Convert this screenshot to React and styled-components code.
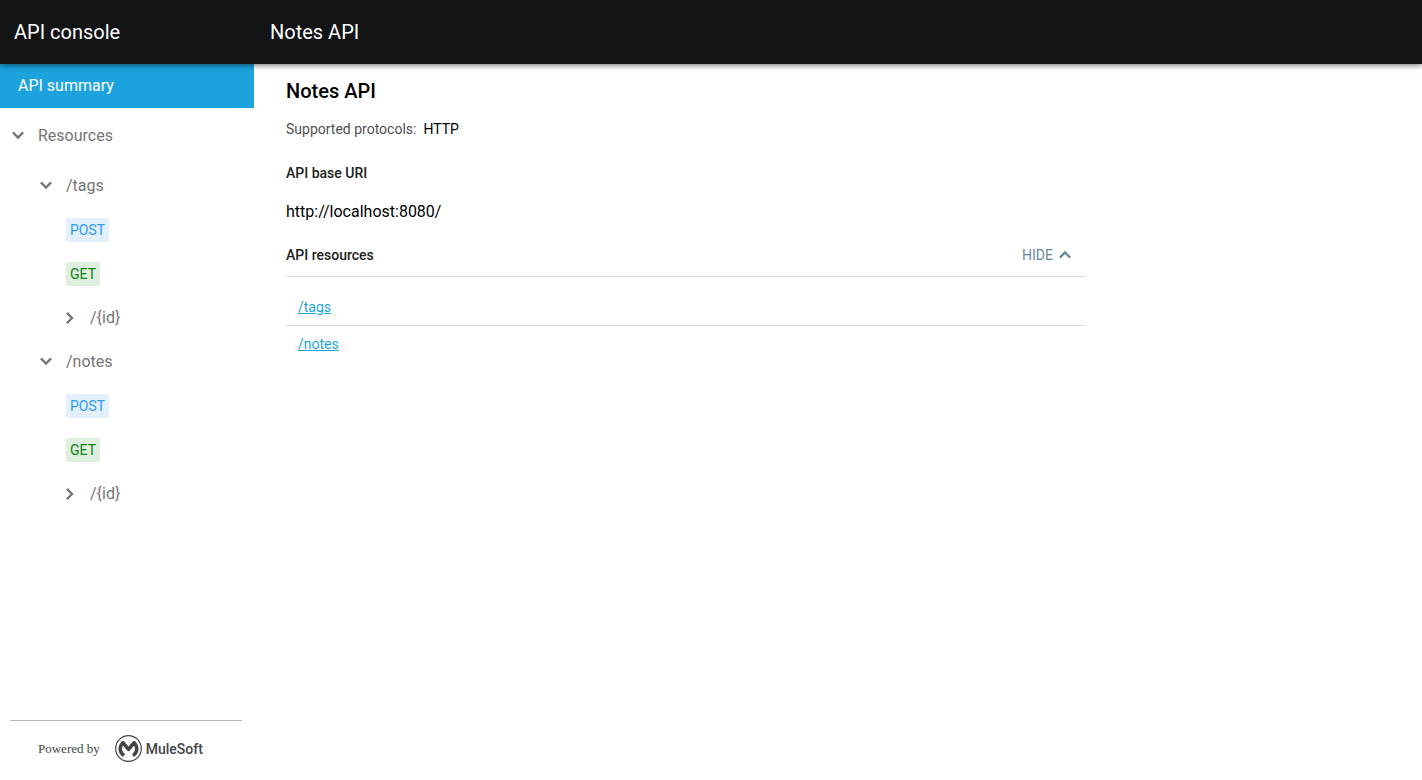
import React, { useState } from 'react'
import styled, { createGlobalStyle, css, ThemeProvider } from 'styled-components'

const theme = {
  headerHeight: '64px',
  drawerWidth: '254px',
  colors: {
    header: '#121416',
    primary: '#1ca3de',
    text: '#000',
    heading: '#212121',
    muted: '#757575',
    label: '#505050',
    action: '#69889a',
    divider: '#dcdcdc',
    logo: '#424547'
  },
  methods: {
    POST: { color: '#2f9af3', background: '#e3f0fd' },
    GET: { color: '#118011', background: '#dfefdf' }
  }
}

const resources = [
  { path: '/tags', methods: ['POST', 'GET'], children: ['/{id}'] },
  { path: '/notes', methods: ['POST', 'GET'], children: ['/{id}'] }
]

const GlobalStyle = createGlobalStyle`
  *, *::before, *::after {
    box-sizing: border-box;
  }
  body {
    margin: 0;
    background: #fff;
    color: ${props => props.theme.colors.text};
    font-family: Roboto, "Liberation Sans", sans-serif;
    font-size: 14px;
    line-height: 20px;
  }
`

const Page = styled.div`
  display: flex;
  flex-direction: column;
  min-height: 100vh;
`

const Header = styled.header`
  display: flex;
  align-items: center;
  height: ${props => props.theme.headerHeight};
  background: ${props => props.theme.colors.header};
  color: #fff;
  font-size: 20px;
  line-height: 24px;
  box-shadow: 0 1px 6px rgba(0, 0, 0, 0.6);
  position: relative;
  z-index: 1;
`

const DrawerTitle = styled.div`
  width: ${props => props.theme.drawerWidth};
  padding-left: 14px;
`

const PageTitle = styled.div`
  padding-left: 16px;
`

const Body = styled.div`
  display: flex;
  flex: 1;
`

const Drawer = styled.aside`
  display: flex;
  flex-direction: column;
  flex: none;
  width: ${props => props.theme.drawerWidth};
`

const Navigation = styled.nav`
  flex: 1;
  font-size: 16px;
`

const SummaryLink = styled.a`
  display: flex;
  align-items: center;
  height: 44px;
  padding-left: 18px;
  background: ${props => props.theme.colors.primary};
  color: #fff;
  text-decoration: none;
`

const List = styled.ul`
  margin: 0;
  padding: 0;
  list-style: none;
`

const rowStyle = css`
  display: flex;
  align-items: center;
  width: 100%;
  height: 44px;
  padding: 0 0 0 ${props => props.$indent}px;
`

const TreeToggle = styled.button`
  ${rowStyle}
  gap: 8px;
  margin: ${props => (props.$root ? '6px 0' : '0')};
  border: none;
  background: none;
  color: ${props => props.theme.colors.muted};
  font: inherit;
  text-align: left;
  cursor: pointer;
`

const MethodLink = styled.a`
  ${rowStyle}
  text-decoration: none;
`

const Method = styled.span`
  padding: 2px 4px;
  border-radius: 2px;
  font-size: 14px;
  color: ${props => props.theme.methods[props.$method].color};
  background: ${props => props.theme.methods[props.$method].background};
`

const Footer = styled.footer`
  display: flex;
  align-items: center;
  gap: 15px;
  height: 60px;
  margin: 0 12px 0 10px;
  padding: 0 0 4px 28px;
  border-top: 1px solid #b4b4b4;
  color: ${props => props.theme.colors.logo};
  font-family: "Liberation Serif", serif;
  font-size: 13px;
`

const Brand = styled.a`
  display: flex;
  align-items: center;
  gap: 4px;
  color: inherit;
  font-family: Roboto, sans-serif;
  font-size: 14px;
  font-weight: 500;
  text-decoration: none;
`

const Main = styled.main`
  flex: 1;
  min-width: 0;
  padding: 15px 32px;
`

const Summary = styled.div`
  max-width: 800px;
`

const Title = styled.h1`
  margin: 0 0 16px;
  font-size: 20px;
  font-weight: 500;
  line-height: 24px;
`

const Protocols = styled.dl`
  display: flex;
  gap: 7px;
  margin: 0 0 24px;
  & > dt {
    color: ${props => props.theme.colors.label};
  }
  & > dd {
    margin: 0;
  }
`

const SectionTitle = styled.h2`
  margin: 0;
  color: ${props => props.theme.colors.heading};
  font-size: 14px;
  font-weight: 500;
  line-height: 20px;
`

const BaseUri = styled.p`
  margin: 17px 0 9px;
  font-size: 16px;
  line-height: 24px;
`

const SectionHeader = styled.div`
  display: flex;
  align-items: center;
  justify-content: space-between;
  height: 44px;
  border-bottom: 1px solid ${props => props.theme.colors.divider};
`

const HideButton = styled.button`
  display: flex;
  align-items: center;
  padding: 0 9px;
  border: none;
  background: none;
  color: ${props => props.theme.colors.action};
  font: inherit;
  text-transform: uppercase;
  cursor: pointer;
`

const ResourceList = styled(List)`
  padding-top: 12px;
`

const ResourceItem = styled.li`
  padding: 8px 12px;
  & + & {
    border-top: 1px solid ${props => props.theme.colors.divider};
  }
`

const ResourceLink = styled.a`
  color: ${props => props.theme.colors.primary};
`

const ChevronIcon = styled.svg.attrs({
  width: 24,
  height: 24,
  viewBox: '0 0 24 24',
  'aria-hidden': true
})`
  flex: none;
  fill: none;
  stroke: currentColor;
  stroke-width: 2.3;
`

const chevrons = {
  down: 'M6.9 8.4L12 13.5L17.1 8.4',
  right: 'M8.9 6.9L14 12L8.9 17.1',
  up: 'M6.9 14.6L12 9.5L17.1 14.6'
}

const Chevron = ({ direction }) => (
  <ChevronIcon>
    <path d={chevrons[direction]} />
  </ChevronIcon>
)

const MuleLogo = () => (
  <svg width="27" height="27" viewBox="0 0 27 27" fill="none" stroke="currentColor" aria-hidden="true">
    <circle cx="13.5" cy="13.5" r="12.8" strokeWidth="1.2" />
    <path
      d="M9 20.6C4.6 17.6 3.8 12.4 7.9 7.6L13.5 14.4L19.1 7.6C23.2 12.4 22.4 17.6 18 20.6"
      strokeWidth="3.5"
      strokeLinejoin="round"
    />
  </svg>
)

const TreeNode = ({ label, indent, root, defaultOpen = false, children }) => {
  const [open, setOpen] = useState(defaultOpen)
  return (
    <>
      <TreeToggle type="button" $indent={indent} $root={root} aria-expanded={open} onClick={() => setOpen(!open)}>
        <Chevron direction={open ? 'down' : 'right'} />
        {label}
      </TreeToggle>
      {open && children && <List>{children}</List>}
    </>
  )
}

const ResourceNode = ({ path, methods, children }) => (
  <li>
    <TreeNode label={path} indent={34} defaultOpen>
      {methods.map(method => (
        <li key={method}>
          <MethodLink href={`#${path}/${method}`} $indent={66}>
            <Method $method={method}>{method}</Method>
          </MethodLink>
        </li>
      ))}
      {children.map(child => (
        <li key={child}>
          <TreeNode label={child} indent={58} />
        </li>
      ))}
    </TreeNode>
  </li>
)

const ApiSummary = () => {
  const [opened, setOpened] = useState(true)
  return (
    <Summary>
      <Title>Notes API</Title>
      <Protocols>
        <dt>Supported protocols:</dt>
        <dd>HTTP</dd>
      </Protocols>
      <SectionTitle>API base URI</SectionTitle>
      <BaseUri>http://localhost:8080/</BaseUri>
      <SectionHeader>
        <SectionTitle>API resources</SectionTitle>
        <HideButton type="button" aria-expanded={opened} onClick={() => setOpened(!opened)}>
          {opened ? 'Hide' : 'Show'}
          <Chevron direction={opened ? 'up' : 'down'} />
        </HideButton>
      </SectionHeader>
      {opened && (
        <ResourceList>
          {resources.map(({ path }) => (
            <ResourceItem key={path}>
              <ResourceLink href={`#${path}`}>{path}</ResourceLink>
            </ResourceItem>
          ))}
        </ResourceList>
      )}
    </Summary>
  )
}

const App = () => (
  <ThemeProvider theme={theme}>
    <GlobalStyle />
    <Page>
      <Header>
        <DrawerTitle>API console</DrawerTitle>
        <PageTitle>Notes API</PageTitle>
      </Header>
      <Body>
        <Drawer>
          <Navigation>
            <SummaryLink href="#summary">API summary</SummaryLink>
            <TreeNode label="Resources" indent={6} root defaultOpen>
              {resources.map(({ path, methods, children }) => (
                <ResourceNode key={path} path={path} methods={methods}>
                  {children}
                </ResourceNode>
              ))}
            </TreeNode>
          </Navigation>
          <Footer>
            Powered by
            <Brand href="#mulesoft">
              <MuleLogo />
              MuleSoft
            </Brand>
          </Footer>
        </Drawer>
        <Main>
          <ApiSummary />
        </Main>
      </Body>
    </Page>
  </ThemeProvider>
)

export default App
